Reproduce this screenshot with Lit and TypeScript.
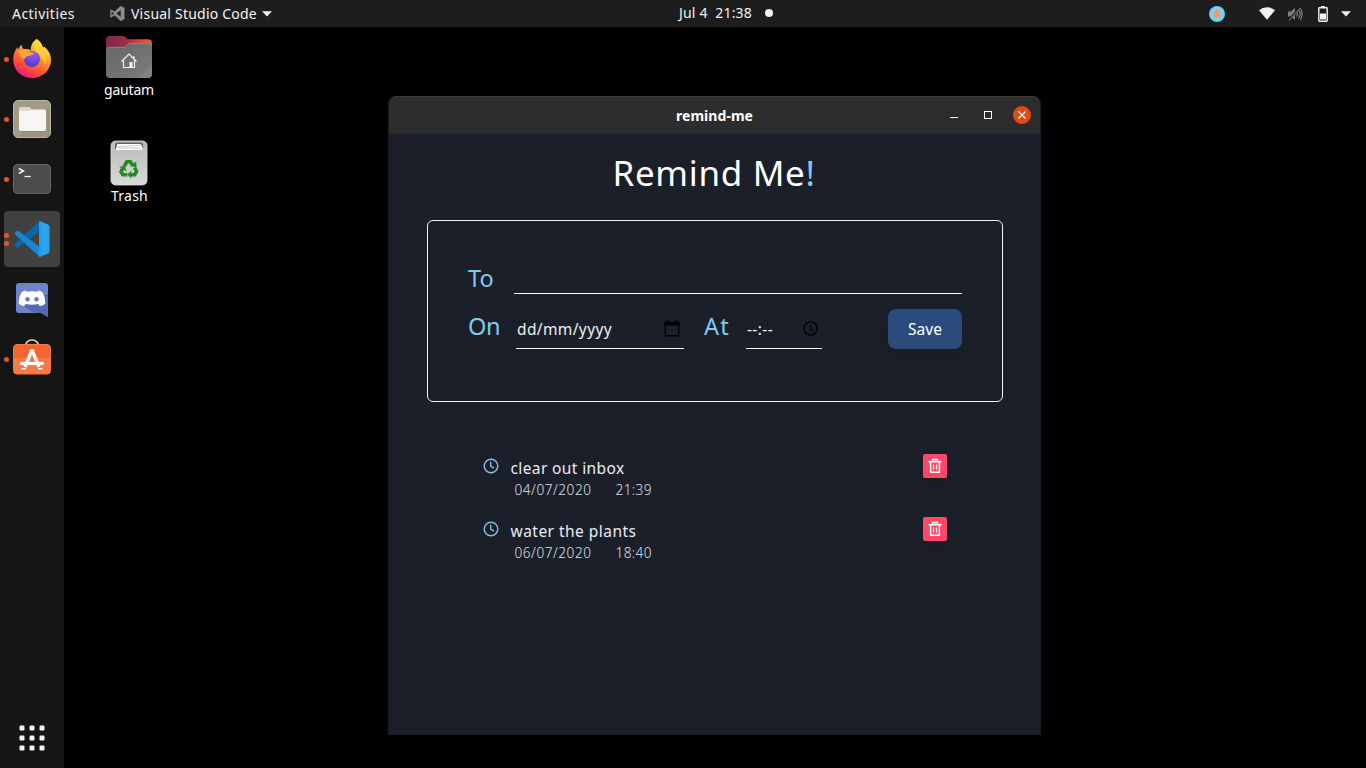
import { LitElement, html, css, svg } from "lit";
import { customElement, property, query } from "lit/decorators.js";

/** A single line of text whose tracking is adjusted so that it fills `width` pixels. */
@customElement("fit-text")
class FitText extends LitElement {
  @property({ type: Number }) width = 0;
  @property() text = "";
  @query("span") span!: HTMLSpanElement;

  static styles = css`
    :host { display: block; flex: none; white-space: pre; }
    span { display: inline-block; }
  `;

  updated() {
    const s = this.span;
    s.style.letterSpacing = "0px";
    const natural = s.getBoundingClientRect().width;
    const gap = (this.width - natural) / Math.max(1, this.text.length);
    s.style.letterSpacing = gap.toFixed(3) + "px";
    this.style.width = this.width + "px";
  }

  render() {
    return html`<span>${this.text}</span>`;
  }
}

const t = (text: string, width: number, cls = "") =>
  html`<fit-text class=${cls} .text=${text} .width=${width}></fit-text>`;

const firefox = html`<svg width="40" height="40" viewBox="0 1 40 40">
  <defs>
    <linearGradient id="ffa" x1=".8" y1=".05" x2=".3" y2="1">
      <stop offset="0" stop-color="#fff44f" /><stop offset=".3" stop-color="#ffb02e" />
      <stop offset=".6" stop-color="#ff6a2a" /><stop offset=".85" stop-color="#ff3150" /><stop offset="1" stop-color="#e31587" />
    </linearGradient>
    <radialGradient id="ffb" cx=".6" cy=".2" r=".8">
      <stop offset="0" stop-color="#a050f5" /><stop offset=".6" stop-color="#6b4be0" /><stop offset="1" stop-color="#4a3fb8" />
    </radialGradient>
  </defs>
  <path fill="url(#ffa)" d="M24.5 1c3 1.700 5.500 5 6.500 8.500 1-.5 1.700-.5 1.700-.5 3.500 3 6.300 7.500 6.300 13 0 10.200-8.300 18-19 18S1.200 32 1.200 21.500c0-5 2-9.500 4.300-12.500l.5 3C7 9.500 8.500 7.500 9.700 6.700c0 2 .8 3.800 2.300 4.600 2.500-.5 5 0 7 1.200-1-4 2-9.300 5.500-11.500z" />
  <circle cx="20" cy="21" r="8" fill="url(#ffb)" />
  <path fill="#ffa52e" d="M6.500 13.500c3-2.500 7-2.700 10-.5 1.500 1 3.500 1.800 6 1.800-1 2-3.500 2.700-6.500 3.200-1.500.3-2.500 1.500-3.300 3-3-1-5.700-3.500-6.200-7.500z" />
  <path fill="#ffd43b" opacity=".75" d="M24.500 1c3 1.700 5.500 5 6.500 8.500 4 5 4.500 12 1.500 17-1-7-5-10-8.500-12.500-3-2.500-2.500-9 .5-13z" />
</svg>`;

const files = html`<svg width="40" height="40" viewBox="0 0 40 40">
  <rect x="1.500" y="1.500" width="37" height="37" rx="4.500" fill="#a39b87" stroke="#bbb4a4" />
  <path d="M38 8v26a4 4 0 0 1-4 4H6z" fill="#9b937e" />
  <path d="M7 10q0-2 2-2h8q1.500 0 2 1.500L20 12v4H7z" fill="#dedacb" />
  <path d="M7 13q0-1 1-1h9l2-1.500h13q2 0 2 2V30q0 2-2 2H9q-2 0-2-2z" fill="#f7f6f5" />
  <path d="M8 32.500h25" stroke="#837b68" opacity=".6" />
</svg>`;

const terminal = html`<svg width="40" height="40" viewBox="0 0 40 40">
  <rect x="1.500" y="5.500" width="37" height="29" rx="4" fill="#4c4c4c" stroke="#656565" />
  <path d="M6.800 9.500l4.700 2.500-4.700 2.500" fill="none" stroke="#f3f3f3" stroke-width="1.500" />
  <path d="M12.500 17.500h6.300" stroke="#f3f3f3" stroke-width="1.300" />
</svg>`;

const code = html`<svg width="40" height="40" viewBox="0 0 40 40">
  <path d="M27 2.500L6 22l-3 2.500a1.200 1.200 0 0 0 0 1.800l1.800 1.700q.8.600 1.700 0L28 12z" fill="#0069b0" />
  <path d="M27 37.500L28 28 6.500 12q-.8-.6-1.700 0L3 13.500q-.8.900 0 1.800z" fill="#1488d0" />
  <path d="M27 2.500q1-.3 2 0l7.300 3.300q1.200.6 1.200 2v24.400q0 1.400-1.200 2L29 37.500q-1 .4-2 0 1.200-.5 1.200-2v-31q0-1.500-1.200-2z" fill="#2ba5f0" />
  <path d="M27 37.500V2.500q1.500-.3 2 0l.500 34.700z" fill="#239ce9" />
</svg>`;

const discord = html`<svg width="40" height="40" viewBox="0 0 40 40">
  <path d="M7 4h26q3 0 3 3v31l-7-4H7q-3 0-3-3V7q0-3 3-3z" fill="#6f84cc" />
  <path d="M36 15v23l-7-4-7-.2L8 25z" fill="#5569b3" />
  <path d="M14 11.500q-3 .4-4.700 2-2.700 5-2.700 11 2.400 2.600 5.600 2.600l1.500-2q6.300 1.500 12.600 0l1.500 2q3.200 0 5.600-2.600 0-6-2.700-11-1.700-1.600-4.700-2l-.8 1.300q-5.200-1-10.400 0z" fill="#fff" />
  <circle cx="15.500" cy="20.300" r="2.200" fill="#6478bd" /><circle cx="24.500" cy="20.300" r="2.200" fill="#6478bd" />
</svg>`;

const store = html`<svg width="40" height="40" viewBox="0 1 40 40">
  <path d="M13.500 8V7.500a6.500 5.500 0 0 1 13 0V8" fill="none" stroke="#f3dec0" stroke-width="1.500" />
  <rect x="1.500" y="6.500" width="37" height="29.500" rx="3.500" fill="#f26430" stroke="#f37c4e" />
  <path d="M2 20h36v12.500a3 3 0 0 1-3 3H5a3 3 0 0 1-3-3z" fill="#f97a44" />
  <path d="M13 29L20 12 27 29" fill="none" stroke="#fff" stroke-width="3.400" stroke-linejoin="bevel" />
  <path d="M9.500 25.500h21" stroke="#fff" stroke-width="3" stroke-linecap="round" />
  <path d="M9.500 30.800h4.500M26 30.800h4.500" stroke="#fff" stroke-width="1.500" />
</svg>`;

const appsGrid = html`<svg width="28" height="28" viewBox="0 0 28 28">
  ${[0, 1, 2].map((r) => [0, 1, 2].map((c) => svg`<rect x=${1.5 + c * 10} y=${1.5 + r * 10} width="5" height="5" rx="1.200" fill="#f2f2f2"/>`))}
</svg>`;

const homeFolder = html`<svg width="48" height="44" viewBox="0 0 48 44">
  <defs><linearGradient id="hf"><stop offset="0" stop-color="#7d2750" /><stop offset=".45" stop-color="#9c3048" /><stop offset=".8" stop-color="#e6501f" /><stop offset="1" stop-color="#ed5a24" /></linearGradient>
  <linearGradient id="hg" x2="1" y2="1"><stop offset="0" stop-color="#666" /><stop offset="1" stop-color="#7c7c7c" /></linearGradient></defs>
  <path d="M1 5q0-4 4-4h13q2 0 3 1.500l1.500 1.700H43q4 0 4 4V20H1z" fill="url(#hf)" />
  <path d="M1 15q0-3 3-3h14.500q2 0 3-1.500T25 8h18q4 0 4 3v28q0 4-4 4H5q-4 0-4-4z" fill="url(#hg)" />
  <path d="M1.500 15q0-2.600 3-2.600h14q2 0 3-1.500T25 8.400h18q3.500 0 3.500 2.600" fill="none" stroke="#8d8d8d" stroke-width=".8" />
  <path d="M47 30v9q0 4-4 4h-9z" fill="#8a8a8a" opacity=".5" />
  <path d="M16.500 26.500L24 19l7.500 7.500M18.500 25.500V32.500h11v-7M29 21v3" fill="none" stroke="#f0f0f0" stroke-width="1.200" />
  <path d="M24.500 27h3v5.500h-3z" fill="#f0f0f0" />
</svg>`;

const trashCan = html`<svg width="40" height="48" viewBox="0 0 40 48">
  <defs><linearGradient id="tc" x2="0" y2="1"><stop offset="0" stop-color="#b9b9b9" /><stop offset="1" stop-color="#dadada" /></linearGradient></defs>
  <rect x="2" y="2" width="36" height="44" rx="4.500" fill="url(#tc)" stroke="#ddd" stroke-width=".8" />
  <path d="M6 10.500V6q0-2.500 2.500-2.500h23Q34 3.500 34 6v4.500z" fill="#666" />
  <path d="M6.500 11L8.500 5h22.500l1.500 1 1.500 5z" fill="#fff" /><path d="M9 7.500l22-1M8 9h24" stroke="#aaa" stroke-width=".6" />
  <g fill="none" stroke="#258b25" stroke-width="3.600">
    <path d="M15.200 27.300l2.600-4.500h3.700l2.300 3.700" />
    <path d="M25.500 28.500l2 3.700-1.800 3.600h-4.400" />
    <path d="M18.300 35.800h-4.400L12 32.600l1.900-3.600" />
  </g>
  <path d="M21 27.300l6.500 1-.2-6zM22.300 31.500v8l-4-4zM10 27.700l5.700-.6 2.200 5.300z" fill="#258b25" />
</svg>`;

const caret = html`<svg class="caret" width="10" height="6" viewBox="0 0 10 6"><path d="M0 .3h10L5 5.500z" fill="#f2f2f2" /></svg>`;

const clockIcon = html`<svg class="clock" width="16" height="16" viewBox="0 0 16 16">
  <circle cx="8" cy="8" r="6.800" fill="none" stroke="#7cc3ea" stroke-width="1.400" />
  <path d="M7.700 4.200v4l2.800 1.700" fill="none" stroke="#7cc3ea" stroke-width="1.400" stroke-linecap="round" />
</svg>`;

const binIcon = html`<svg width="14" height="16" viewBox="0 0 14 16" fill="none" stroke="#fff">
  <path d="M.5 3.700h13" stroke-width="1.600" /><path d="M4.500 3.500v-2h5v2" stroke-width="1.300" />
  <path d="M2.600 3.500v10.800h8.800v-10.800" stroke-width="1.500" stroke-linejoin="round" /><path d="M5.500 6.500v5M8.500 6.500v5" stroke-width="1.200" />
</svg>`;

@customElement("app-root")
class AppRoot extends LitElement {
  static styles = css`
    :host { display: block; width: 1366px; height: 768px; overflow: hidden; background: #000; color: #f2f2f2; font-family: "Noto Sans", "Open Sans", sans-serif; }
    * { box-sizing: border-box; }
    svg { display: block; flex: none; }
    .screen { display: flex; flex-direction: column; height: 768px; }
    .topbar { display: flex; align-items: center; height: 27px; flex: none; background: #1d1d1d; padding-left: 12px; font-size: 14px; line-height: 26px; }
    .topbar .vs { margin: 0 6px 0 35px; }
    .topbar .caret { margin-left: 5px; }
    .topbar .date { margin-left: 407px; padding-bottom: 1px; }
    .dot { width: 8px; height: 8px; border-radius: 50%; background: #f2f2f2; margin: 0 0 1px 13px; }
    .tray { display: flex; align-items: center; margin-left: auto; padding-right: 15px; height: 26px; }
    .bell { margin-right: 34px; }
    .wifi { margin-right: 12px; }
    .sound { margin-right: 15px; }
    .battery { margin-right: 8px; }
    .body { display: flex; flex: 1; }
    .dock { display: flex; flex-direction: column; gap: 4px; width: 64px; background: #151515; padding: 4px 4px 2px; }
    .item { display: grid; grid-template-columns: 5px 40px; column-gap: 3px; align-items: center; height: 56px; border-radius: 4px; }
    .item.active { background: #414141; }
    .pips { display: flex; flex-direction: column; gap: 3px; }
    .pip { width: 5px; height: 5px; border-radius: 50%; background: #e95420; }
    .apps { display: flex; align-items: center; justify-content: center; height: 56px; margin-top: auto; }
    .desktop { position: relative; flex: 1; padding: 8px 0 0 15px; }
    .shortcut { display: flex; flex-direction: column; align-items: center; width: 100px; font-size: 14px; line-height: 22px; color: #fff; }
    .home { height: 104px; }
    .bin { padding-left: 1px; }
    .bin svg { margin: 0 1px -2px 0; }
    .window { position: absolute; left: 324px; top: 69px; width: 653px; height: 639px; border: 1px solid #191b22; border-top: 0; border-radius: 8px 8px 0 0; overflow: hidden; background: #1b1f2a; }
    .titlebar { display: grid; grid-template-columns: 287px 76px 1fr; align-items: start; height: 37px; background: #2c2c2c; border-top: 1px solid #3d3d3d; border-radius: 7px 7px 0 0; }
    .name { font-size: 14px; font-weight: 700; line-height: 38px; color: #fff; grid-column: 2; }
    .controls { display: flex; justify-content: flex-end; align-items: center; gap: 16px; height: 36px; padding-right: 9px; }
    .content { padding: 11px 37px 0 38px; border-top: 1px solid #252731; }
    .heading { display: flex; justify-content: center; font-size: 35px; line-height: 56px; color: #fff; height: 75px; padding-right: 1px; }
    .accent, .field { color: #81caf1; }
    .form { height: 182px; border: 1px solid #f4f4f6; border-radius: 6px; padding: 37px 40px 0; }
    .row { display: flex; }
    .field { font-size: 23.500px; line-height: 40px; }
    .line { border-bottom: 1px solid #fff; }
    .to { width: 448px; height: 36px; margin-left: 20px; }
    .when { height: 55px; padding-top: 8px; }
    .entry { display: flex; justify-content: space-between; align-items: center; height: 39px; margin-top: 4px; padding: 3px 4px 3px 1px; font-size: 15.500px; line-height: 32px; color: #f0f0f0; }
    .day { width: 168px; margin-left: 16px; margin-right: 20px; }
    .time { width: 76px; margin-left: 16px; }
    .day svg, .time svg { margin-top: -2px; }
    .save { display: flex; justify-content: center; width: 74px; height: 40px; margin: 3px 0 0 auto; border-radius: 8px; background: #2b4b7d; color: #fff; font-size: 15.500px; line-height: 40px; box-shadow: 0 8px 12px rgba(10, 12, 20, .1); }
    .list { display: flex; flex-direction: column; gap: 13px; padding: 49px 56px 0; }
    .reminder { display: flex; align-items: flex-start; height: 50px; }
    .clock { margin: 7px 11.500px 0 0; }
    .what { font-size: 15.500px; line-height: 25px; color: #e9edf3; padding-top: 5px; }
    .stamp { display: flex; gap: 24px; font-size: 13.600px; line-height: 18px; color: #dfe3e8; padding-left: 4px; font-weight: 300; }
    .remove { display: flex; align-items: center; justify-content: center; width: 24px; height: 24px; margin: 3px 0 0 auto; border-radius: 2px; background: #ff4768; box-shadow: 0 6px 10px rgba(10, 12, 20, .1); }
  `;

  dockItem(icon: unknown, pips: number, active = false) {
    return html`<div class="item ${active ? "active" : ""}">
      <div class="pips">${Array.from({ length: pips }, () => html`<div class="pip"></div>`)}</div>${icon}
    </div>`;
  }

  reminder(what: string, width: number, date: string, time: string) {
    return html`<div class="reminder">
      ${clockIcon}
      <div>
        ${t(what, width, "what")}
        <div class="stamp">${t(date, 77)}${t(time, 36.5)}</div>
      </div>
      <div class="remove">${binIcon}</div>
    </div>`;
  }

  render() {
    return html`<div class="screen">
      <div class="topbar">
        ${t("Activities", 63)}
        <svg class="vs" width="15" height="15" viewBox="0 0 15 15"><path d="M10.500 0L14.500 1.700v11.600L10.500 15 4.500 9.300 1.500 11.600.3 11V4l1.200-.6 3 2.300zM10.700 4.200L6.500 7.500l4.200 3.300zM1.700 5.500v4l2-2z" fill="#8b8b8b" fill-rule="evenodd" /></svg>
        ${t("Visual Studio Code", 126)}${caret}
        ${t("Jul 4  21:38", 73, "date")}
        <div class="dot"></div>
        <div class="tray">
          <svg class="bell" width="16" height="16" viewBox="0 0 16 16"><circle cx="8" cy="8" r="8" fill="#62c8f3" /><circle cx="8" cy="8" r="7" fill="#78d5f5" /><path d="M8 3.500q3.200.4 3.200 4v2.800l1 1.300H9.300q-1.300 1.500-2.600 0H3.800l1-1.300V7.500q0-3.600 3.200-4z" fill="#f59a5f" /></svg>
          <svg class="wifi" width="16" height="13" viewBox="0 0 16 13"><path d="M8 12.700L0 3.300Q3.500.3 8 .3t8 3z" fill="#f2f2f2" /></svg>
          <svg class="sound" width="16" height="14" viewBox="0 0 16 14" fill="none" stroke="#808080"><path d="M1 4.500h3l4-3.500v12l-4-3.500H1z" fill="#808080" stroke="none" /><path d="M9.500 4.500q2 2.500 0 5M11.500 2.500q3.300 4.500 0 9M13.300 1q3.500 6 0 12" stroke-width="1.200" /><path d="M1.500 13L13 1" stroke="#1d1d1d" stroke-width="2.500" /><path d="M2 13.500L13.500 1" stroke-width="1.100" /></svg>
          <svg class="battery" width="10" height="16" viewBox="0 1 10 16"><path d="M3 1h4v1.500H3z" fill="#f2f2f2" /><rect x=".8" y="2.800" width="8.400" height="13.400" rx=".6" fill="none" stroke="#f2f2f2" stroke-width="1.400" /><path d="M2 8.500h6v6H2z" fill="#f2f2f2" /></svg>
          ${caret}
        </div>
      </div>
      <div class="body">
        <div class="dock">
          ${this.dockItem(firefox, 1)}${this.dockItem(files, 1)}${this.dockItem(terminal, 1)}
          ${this.dockItem(code, 2, true)}${this.dockItem(discord, 0)}${this.dockItem(store, 1)}
          <div class="apps">${appsGrid}</div>
        </div>
        <div class="desktop">
          <div class="shortcut home">${homeFolder}${t("gautam", 50)}</div>
          <div class="shortcut bin">${trashCan}${t("Trash", 37)}</div>
          <div class="window">
            <div class="titlebar">
              ${t("remind-me", 77, "name")}
              <div class="controls">
                <svg width="18" height="18" viewBox="0 0 18 18"><path d="M5 11.500h8" stroke="#fff" /></svg>
                <svg width="18" height="18" viewBox="0 0 18 18"><rect x="5.500" y="5.500" width="7" height="7" fill="none" stroke="#fff" /></svg>
                <svg width="18" height="18" viewBox="0 0 18 18"><circle cx="9" cy="9" r="9" fill="#e04c18" /><path d="M5.500 5.500l7 7M12.500 5.500l-7 7" stroke="#fff" stroke-width="1.300" /></svg>
              </div>
            </div>
            <div class="content">
              <div class="heading">${t("Remind Me", 193)}${t("!", 11, "accent")}</div>
              <div class="form">
                <div class="row">${t("To", 26, "field")}<div class="line to"></div></div>
                <div class="row when">
                  ${t("On", 32, "field")}
                  <div class="line entry day">${t("dd/mm/yyyy", 95)}
                    <svg width="16" height="17" viewBox="0 0 16 17"><path d="M1.200 3.500h13.600v12.200H1.200z" fill="none" stroke="#000" stroke-width="1.400" /><path d="M.5 1.500h15v4H.5zM3 0h1.500v2H3zM11.500 0H13v2h-1.500z" fill="#000" /></svg>
                  </div>
                  ${t("At", 26, "field")}
                  <div class="line entry time">${t("--:--", 26)}
                    <svg width="15" height="15" viewBox="0 0 15 15" fill="none" stroke="#000"><circle cx="7.500" cy="7.500" r="6.600" stroke-width="1.400" /><path d="M7.500 3.500V8l3 2" stroke-width="1.200" /></svg>
                  </div>
                  <div class="save">${t("Save", 34)}</div>
                </div>
              </div>
              <div class="list">
                ${this.reminder("clear out inbox", 114, "04/07/2020", "21:39")}
                ${this.reminder("water the plants", 126, "06/07/2020", "18:40")}
              </div>
            </div>
          </div>
        </div>
      </div>
    </div>`;
  }
}
